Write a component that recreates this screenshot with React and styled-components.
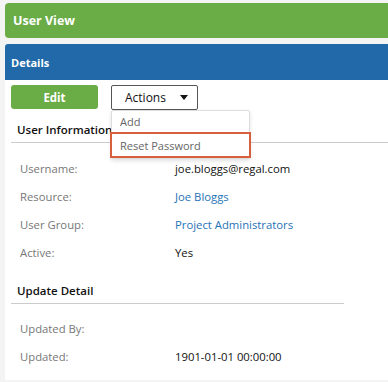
import React from 'react'
import styled, { createGlobalStyle } from 'styled-components'

const GlobalStyle = createGlobalStyle`
  html, body {
    margin: 0;
    background: #f4f4f4;
    font-family: "Open Sans", "Liberation Sans", sans-serif;
  }
`

const Page = styled.div`
  padding: 3px 0 0 5px;
  height: 382px;
  box-sizing: border-box;
  overflow: hidden;
`

const TitleBar = styled.div`
  height: 35px;
  background: #6aac46;
  border-radius: 4px 0 0 4px;
  color: #fff;
  font-weight: 700;
  font-size: 12.5px;
  display: flex;
  align-items: center;
  padding-left: 8px;
  margin-bottom: 6px;
`

const Panel = styled.div`
  background: #fff;
  height: 336px;
`

const PanelHeader = styled.div`
  height: 36px;
  background: #2169a8;
  border-radius: 3px 0 0 0;
  color: #fff;
  font-weight: 700;
  font-size: 11px;
  display: flex;
  align-items: center;
  padding-left: 6px;
`

const PanelBody = styled.div`
  padding: 5px 0 0 6px;
`

const Toolbar = styled.div`
  display: flex;
  gap: 13px;
  height: 25px;
`

const EditButton = styled.button`
  width: 87px;
  height: 24px;
  border: none;
  border-radius: 3px;
  background: #6aac46;
  color: #fff;
  font-family: inherit;
  font-weight: 700;
  font-size: 11.5px;
  padding: 0;
`

const ActionsWrap = styled.div`
  position: relative;
`

const ActionsButton = styled.button`
  width: 87px;
  height: 25px;
  border: 1px solid #555;
  border-radius: 2px;
  background: #fff;
  color: #111;
  font-family: inherit;
  font-size: 12px;
  display: flex;
  align-items: center;
  justify-content: space-between;
  padding: 0 9px 0 13px;
`

const Caret = styled.span`
  width: 0;
  height: 0;
  border-left: 4.5px solid transparent;
  border-right: 4.5px solid transparent;
  border-top: 5px solid #111;
`

const Menu = styled.ul`
  position: absolute;
  top: 25px;
  left: 0;
  width: 137px;
  margin: 0;
  padding: 0;
  list-style: none;
  background: #fff;
  border: 1px solid #ddd;
  border-radius: 2px;
  box-shadow: 0 2px 4px rgba(0, 0, 0, 0.12);
  z-index: 2;
`

const MenuItem = styled.li`
  height: ${p => (p.$active ? '22px' : '21px')};
  display: flex;
  align-items: center;
  padding-left: 8px;
  font-size: 11px;
  color: #666;
  border: ${p => (p.$active ? '2px solid #d6603d' : 'none')};
  margin: ${p => (p.$active ? '0 -2px' : '0')};
`

const SectionTitle = styled.div`
  margin-top: ${p => p.$top || 0}px;
  height: 21px;
  border-bottom: 1px solid #ccc;
  width: ${p => p.$width || 'auto'};
  padding-left: 6px;
  font-size: 11.5px;
  font-weight: 600;
  color: #111;
  box-sizing: border-box;
`

const Rows = styled.div`
  padding: ${p => p.$top}px 0 0 9px;
  margin-bottom: ${p => p.$bottom || 0}px;
`

const Row = styled.div`
  display: grid;
  grid-template-columns: 155px 1fr;
  height: 28px;
  align-items: center;
  font-size: 11.3px;
`

const Label = styled.span`
  color: #777;
`

const Value = styled.span`
  color: ${p => (p.$link ? '#1f73b7' : '#111')};
`

const userInfo = [
  { label: 'Username:', value: 'joe.bloggs@regal.com' },
  { label: 'Resource:', value: 'Joe Bloggs', link: true },
  { label: 'User Group:', value: 'Project Administrators', link: true },
  { label: 'Active:', value: 'Yes' },
]

const updateInfo = [
  { label: 'Updated By:', value: '' },
  { label: 'Updated:', value: '1901-01-01 00:00:00' },
]

export default function App() {
  return (
    <>
      <GlobalStyle />
      <Page>
        <TitleBar>User View</TitleBar>
        <Panel>
          <PanelHeader>Details</PanelHeader>
          <PanelBody>
            <Toolbar>
              <EditButton>Edit</EditButton>
              <ActionsWrap>
                <ActionsButton>
                  Actions <Caret />
                </ActionsButton>
                <Menu>
                  <MenuItem>Add</MenuItem>
                  <MenuItem $active>Reset Password</MenuItem>
                </Menu>
              </ActionsWrap>
            </Toolbar>
            <SectionTitle $top={12}>User Information</SectionTitle>
            <Rows $top={11} $bottom={17}>
              {userInfo.map(r => (
                <Row key={r.label}>
                  <Label>{r.label}</Label>
                  <Value $link={r.link}>{r.value}</Value>
                </Row>
              ))}
            </Rows>
            <SectionTitle $width="333px">Update Detail</SectionTitle>
            <Rows $top={10}>
              {updateInfo.map(r => (
                <Row key={r.label}>
                  <Label>{r.label}</Label>
                  <Value>{r.value}</Value>
                </Row>
              ))}
            </Rows>
          </PanelBody>
        </Panel>
      </Page>
    </>
  )
}
